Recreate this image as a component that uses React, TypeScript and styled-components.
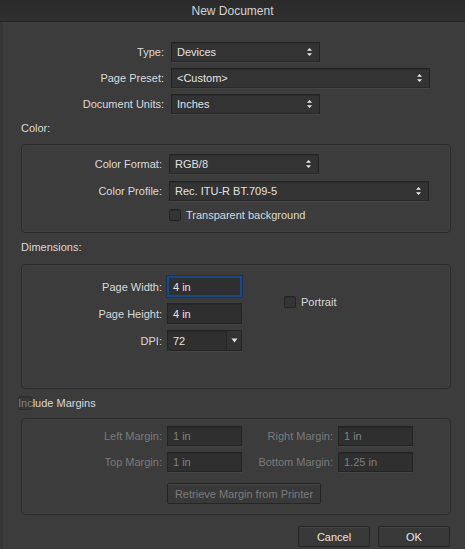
import React from 'react';
import styled, { createGlobalStyle, css } from 'styled-components';

const GlobalStyle = createGlobalStyle`
  html, body {
    margin: 0;
    padding: 0;
    background: #3c3c3c;
  }
  body {
    font-family: "Liberation Sans", Arial, sans-serif;
    font-size: 11px;
    color: #d9d9d9;
  }
`;

const Dialog = styled.div`
  width: 465px;
  height: 549px;
  overflow: hidden;
  background: #3c3c3c;
  box-shadow: inset 3px 0 0 #363636;
  display: flex;
  flex-direction: column;
`;

const TitleBar = styled.div`
  height: 22px;
  background: linear-gradient(#2a2a2a, #303030);
  border-bottom: 1px solid #262626;
  display: flex;
  align-items: center;
  justify-content: center;
  font-size: 12px;
  color: #d4d4d4;
  padding-top: 1px;
  box-sizing: border-box;
`;

const TopForm = styled.div`
  display: grid;
  grid-template-columns: 164px auto;
  column-gap: 7px;
  row-gap: 6px;
  align-items: center;
  justify-items: start;
  padding-top: 20px;
`;

const Label = styled.span<{ $disabled?: boolean }>`
  justify-self: end;
  text-align: right;
  white-space: nowrap;
  color: ${(p) => (p.$disabled ? '#7b7b7b' : '#dadada')};
`;

const SelectBox = styled.div<{ $width: number }>`
  width: ${(p) => p.$width}px;
  height: 20px;
  box-sizing: border-box;
  background: #333333;
  border: 1px solid #232323;
  border-bottom-color: #2a2a2a;
  box-shadow: inset 0 1px 0 #2c2c2c, 0 1px 0 #444;
  display: flex;
  align-items: center;
  padding: 0 6px 0 5px;
  color: #e2e2e2;
`;

const SelectText = styled.span`
  flex: 1;
`;

const SectionTitle = styled.div<{ $left?: number; $below?: number }>`
  height: 14px;
  line-height: 14px;
  margin: 7px 0 ${(p) => p.$below ?? 9}px ${(p) => p.$left ?? 21}px;
  display: flex;
  align-items: center;
`;

const Group = styled.div`
  margin: 0 14px 0 21px;
  border: 1px solid #2b2b2b;
  border-radius: 4px;
  box-shadow: inset 0 0 0 1px #404040;
`;

const ColorGrid = styled.div`
  display: grid;
  grid-template-columns: 140px auto;
  column-gap: 7px;
  row-gap: 7px;
  align-items: center;
  justify-items: start;
  padding: 9px 0 10px;
`;

const CheckRow = styled.label<{ $col?: number }>`
  display: flex;
  align-items: center;
  gap: 5px;
  height: 14px;
  ${(p) =>
    p.$col &&
    css`
      grid-column: ${p.$col};
    `}
`;

const CheckBox = styled.span<{ $faint?: boolean }>`
  width: 12px;
  height: 12px;
  box-sizing: border-box;
  border-radius: 2px;
  background: #343434;
  border: 1px solid #242424;
  box-shadow: inset 0 1px 0 #2c2c2c;
  ${(p) =>
    p.$faint &&
    css`
      width: 14px;
      height: 14px;
      opacity: 0.55;
      margin-right: -14px;
    `}
`;

const DimGrid = styled.div`
  display: grid;
  grid-template-columns: 140px 75px auto;
  column-gap: 5px;
  row-gap: 6px;
  grid-auto-rows: 21px;
  align-items: center;
  justify-items: start;
  padding: 11px 0 37px;
`;

const Field = styled.div<{ $focused?: boolean; $disabled?: boolean; $height?: number }>`
  width: 75px;
  height: ${(p) => p.$height ?? 21}px;
  box-sizing: border-box;
  background: #2f2f2f;
  border: 1px solid #242424;
  box-shadow: inset 0 1px 0 #282828, 0 1px 0 #444;
  display: flex;
  align-items: center;
  padding-left: 5px;
  color: ${(p) => (p.$disabled ? '#808080' : '#e4e4e4')};
  ${(p) =>
    p.$focused &&
    css`
      border: 2px solid #1d4780;
      box-shadow: 0 0 0 1px #173458;
      padding-left: 4px;
    `}
`;

const PortraitCell = styled.div`
  grid-column: 3;
  grid-row: 1 / span 2;
  align-self: center;
  margin: 4px 0 0 37px;
`;

const Combo = styled(Field)`
  padding: 0;
`;

const ComboText = styled.span`
  flex: 1;
  padding-left: 5px;
`;

const ComboButton = styled.span`
  width: 14px;
  height: 100%;
  border-left: 1px solid #262626;
  display: flex;
  align-items: center;
  justify-content: center;
  background: #333;
`;

const MarginGrid = styled.div`
  display: grid;
  grid-template-columns: 140px 75px 86px 75px;
  column-gap: 5px;
  row-gap: 6px;
  align-items: center;
  justify-items: start;
  padding: 7px 0 10px;
`;

const PushButton = styled.button<{ $disabled?: boolean; $width: number }>`
  width: ${(p) => p.$width}px;
  height: 21px;
  box-sizing: border-box;
  font-family: inherit;
  font-size: 11px;
  background: #393939;
  border: 1px solid #252525;
  box-shadow: inset 0 1px 0 #444;
  border-radius: 2px;
  color: ${(p) => (p.$disabled ? '#7b7b7b' : '#e6e6e6')};
  padding: 0;
`;

const RetrieveCell = styled.div`
  grid-column: 2 / span 3;
  margin-top: 5px;
`;

const Footer = styled.div`
  display: flex;
  justify-content: flex-end;
  gap: 8px;
  padding: 11px 15px 0 0;
`;

const Stepper = () => (
  <svg width="7" height="10" viewBox="0 0 7 10">
    <path d="M3.5 1 L6 3.8 L1 3.8 Z" fill="#e8e8e8" />
    <path d="M3.5 9 L6 6.2 L1 6.2 Z" fill="#e8e8e8" />
  </svg>
);

const DownArrow = () => (
  <svg width="7" height="5" viewBox="0 0 7 5">
    <path d="M0.5 0.5 L6.5 0.5 L3.5 4.5 Z" fill="#e0e0e0" />
  </svg>
);

const Select: React.FC<{ value: string; width: number }> = ({ value, width }) => (
  <SelectBox $width={width}>
    <SelectText>{value}</SelectText>
    <Stepper />
  </SelectBox>
);

export default function App() {
  return (
    <>
      <GlobalStyle />
      <Dialog>
        <TitleBar>New Document</TitleBar>

        <TopForm>
          <Label>Type:</Label>
          <Select value="Devices" width={149} />
          <Label>Page Preset:</Label>
          <Select value="<Custom>" width={259} />
          <Label>Document Units:</Label>
          <Select value="Inches" width={149} />
        </TopForm>

        <SectionTitle>Color:</SectionTitle>
        <Group>
          <ColorGrid>
            <Label>Color Format:</Label>
            <Select value="RGB/8" width={150} />
            <Label>Color Profile:</Label>
            <Select value="Rec. ITU-R BT.709-5" width={260} />
            <CheckRow $col={2}>
              <CheckBox />
              Transparent background
            </CheckRow>
          </ColorGrid>
        </Group>

        <SectionTitle $below={10}>Dimensions:</SectionTitle>
        <Group>
          <DimGrid>
            <Label>Page Width:</Label>
            <Field $focused>4 in</Field>
            <PortraitCell>
              <CheckRow>
                <CheckBox />
                Portrait
              </CheckRow>
            </PortraitCell>
            <Label>Page Height:</Label>
            <Field>4 in</Field>
            <Label>DPI:</Label>
            <Combo>
              <ComboText>72</ComboText>
              <ComboButton>
                <DownArrow />
              </ComboButton>
            </Combo>
          </DimGrid>
        </Group>

        <SectionTitle $left={18} $below={8}>
          <CheckBox $faint />
          Include Margins
        </SectionTitle>
        <Group>
          <MarginGrid>
            <Label $disabled>Left Margin:</Label>
            <Field $disabled $height={20}>1 in</Field>
            <Label $disabled>Right Margin:</Label>
            <Field $disabled $height={20}>1 in</Field>
            <Label $disabled>Top Margin:</Label>
            <Field $disabled $height={20}>1 in</Field>
            <Label $disabled>Bottom Margin:</Label>
            <Field $disabled $height={20}>1.25 in</Field>
            <RetrieveCell>
              <PushButton $disabled $width={154}>
                Retrieve Margin from Printer
              </PushButton>
            </RetrieveCell>
          </MarginGrid>
        </Group>

        <Footer>
          <PushButton $width={72}>Cancel</PushButton>
          <PushButton $width={72}>OK</PushButton>
        </Footer>
      </Dialog>
    </>
  );
}
